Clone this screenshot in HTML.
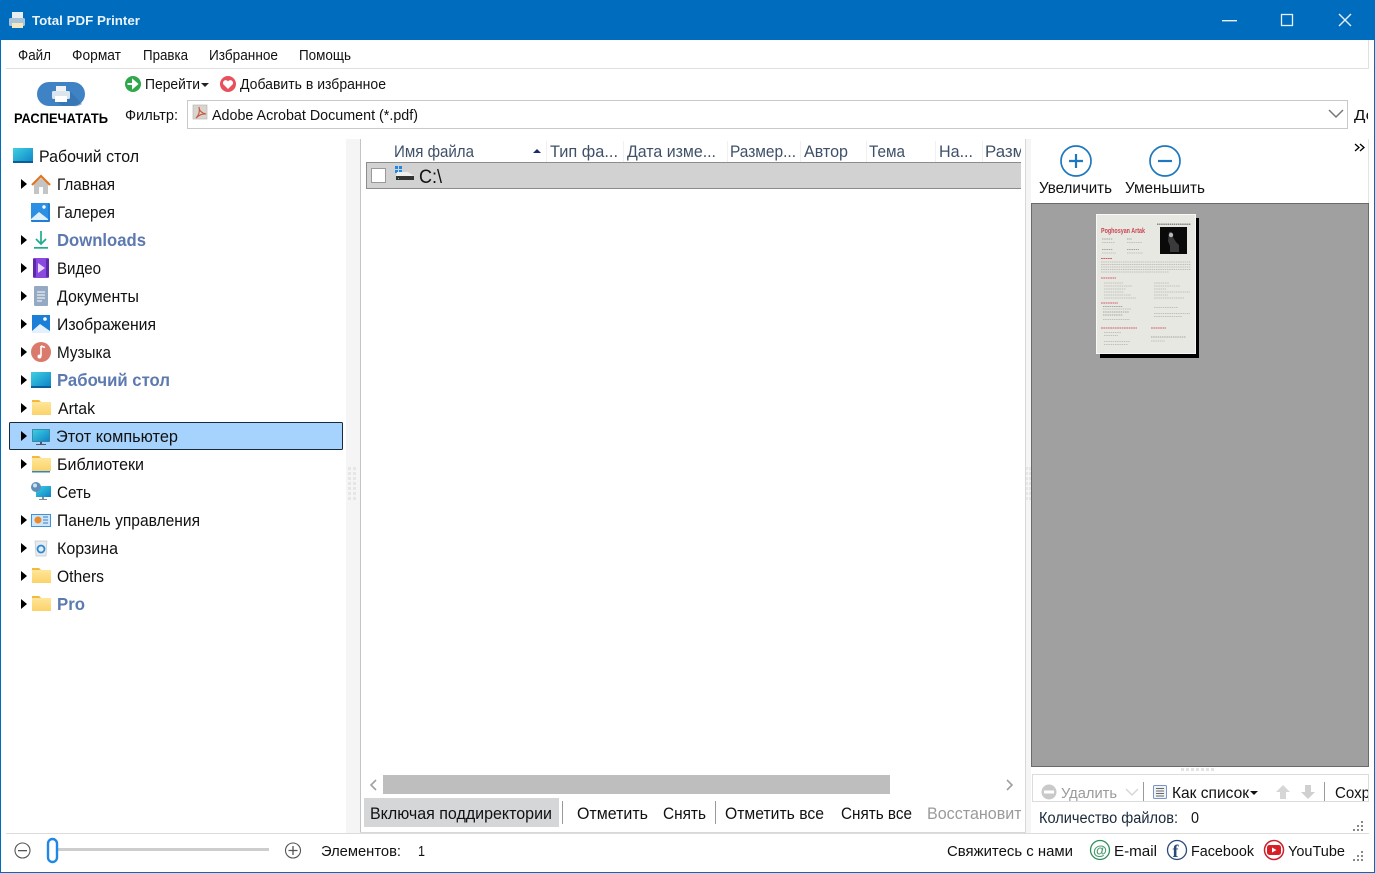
<!DOCTYPE html>
<html lang="ru"><head><meta charset="utf-8"><title>Total PDF Printer</title>
<style>
html,body{margin:0;padding:0;background:#fff;width:1375px;height:873px;overflow:hidden}
svg{display:block}
text{font-family:"Liberation Sans","DejaVu Sans",sans-serif;font-size:15px;fill:#111}
.t{font-size:17px}
.b{font-weight:bold;fill:#5c79b0;font-size:17.5px}
.s{font-size:15px}
.h{fill:#3f5068;font-size:17px}
.g{fill:#9a9a9a}
</style></head><body>
<svg xmlns="http://www.w3.org/2000/svg" width="1375" height="873" viewBox="0 0 1375 873">
<defs>
<clipPath id="c1"><rect x="360" y="138" width="661" height="60"/></clipPath>
<clipPath id="c2"><rect x="920" y="798" width="101" height="30"/></clipPath>
<clipPath id="c3"><rect x="1030" y="775" width="338" height="26"/></clipPath>
<clipPath id="c4"><rect x="1350" y="100" width="18" height="30"/></clipPath>
<linearGradient id="fo" x1="0" y1="0" x2="0" y2="1"><stop offset="0" stop-color="#ffe9a0"/><stop offset="1" stop-color="#fbd26a"/></linearGradient>
<linearGradient id="de" x1="0" y1="0" x2="1" y2="1"><stop offset="0" stop-color="#3fd0e0"/><stop offset="1" stop-color="#0d83c8"/></linearGradient>
<g id="folder"><path d="M1 2h7l2 2h10v13H1z" fill="url(#fo)"/><path d="M1 2h7l2 2H1z" fill="#f3b93f"/></g>
<path id="ar" d="M0 0l6 5-6 5z" fill="#000"/>
</defs>

<!-- window -->
<rect width="1375" height="873" fill="#fff"/>
<rect width="1375" height="40" fill="#006cbe"/>
<rect x="0" y="0" width="1" height="873" fill="#006cbe"/>
<rect x="1374" y="0" width="1" height="873" fill="#006cbe"/>
<rect x="0" y="872" width="1375" height="1" fill="#006cbe"/>

<!-- title icon -->
<rect x="12" y="12" width="11" height="7" fill="#e8edf2"/>
<rect x="9" y="18" width="16" height="8" rx="1.500" fill="#a9c3d8"/>
<rect x="12" y="23" width="11" height="5" fill="#f4e7c2"/>
<text x="32" y="25" textLength="108" lengthAdjust="spacingAndGlyphs" style="font-size:13px;font-weight:bold;fill:#fff;opacity:.92">Total PDF Printer</text>
<rect x="1222" y="20" width="15" height="1.400" fill="#e8f1f9"/>
<rect x="1281.500" y="14.500" width="11" height="11" fill="none" stroke="#e8f1f9" stroke-width="1.300"/>
<path d="M1339 14l12 12M1351 14l-12 12" stroke="#e8f1f9" stroke-width="1.400"/>

<!-- menu -->
<rect x="6" y="68" width="1363" height="1" fill="#e0e0e0"/>
<rect x="1368" y="40" width="1" height="29" fill="#e0e0e0"/>
<text class="s" x="18" y="60" textLength="33" lengthAdjust="spacingAndGlyphs">Файл</text>
<text class="s" x="72" y="60" textLength="49" lengthAdjust="spacingAndGlyphs">Формат</text>
<text class="s" x="143" y="60" textLength="45" lengthAdjust="spacingAndGlyphs">Правка</text>
<text class="s" x="209" y="60" textLength="69" lengthAdjust="spacingAndGlyphs">Избранное</text>
<text class="s" x="299" y="60" textLength="52" lengthAdjust="spacingAndGlyphs">Помощь</text>

<!-- print button -->
<rect x="37" y="82" width="48" height="24" rx="12" fill="#3f83c4"/>
<path d="M69 90l13 14a12 12 0 0 1-9 2H62l-9-8z" fill="#2f6ca8" opacity=".5"/>
<rect x="56" y="86" width="10" height="6" fill="#f0f3f6"/>
<rect x="52" y="91" width="18" height="8" rx="1.500" fill="#dbe5ee"/>
<rect x="55" y="96" width="12" height="6" fill="#fff"/>
<text x="14" y="123" textLength="94" lengthAdjust="spacingAndGlyphs" style="font-size:13.500px;font-weight:bold;fill:#000">РАСПЕЧАТАТЬ</text>

<!-- go / fav -->
<circle cx="133" cy="84" r="8" fill="#2ea84b"/>
<path d="M127.500 84h6M133 80.500l4 3.500-4 3.500z" stroke="#fff" stroke-width="2" fill="#fff"/>
<text class="s" x="145" y="89" textLength="55" lengthAdjust="spacingAndGlyphs">Перейти</text>
<path d="M201 83h8l-4 4z" fill="#222"/>
<circle cx="228" cy="84" r="8" fill="#e8505b"/>
<path d="M228 89l-4.600-4.600a2.600 2.600 0 0 1 4.600-3 2.600 2.600 0 0 1 4.600 3z" fill="#fff"/>
<text class="s" x="240" y="89" textLength="146" lengthAdjust="spacingAndGlyphs">Добавить в избранное</text>

<!-- filter -->
<text class="s" x="125" y="120" textLength="53" lengthAdjust="spacingAndGlyphs">Фильтр:</text>
<rect x="187.500" y="100.500" width="1160" height="28" fill="#fff" stroke="#c9c9c9"/>
<rect x="193" y="105" width="14" height="14" fill="#d8d4d0" stroke="#b5b0aa" stroke-width=".6"/>
<path d="M196 118c3-3 4-7 3-11 0 4 3 6 7 7-4-.5-7 1-10 4z" fill="none" stroke="#c8553c" stroke-width="1.100"/>
<text class="s" x="212" y="120" textLength="206" lengthAdjust="spacingAndGlyphs">Adobe Acrobat Document (*.pdf)</text>
<path d="M1329 110l7 7 7-7" fill="none" stroke="#777" stroke-width="1.500"/>
<text class="s" x="1354" y="120" textLength="21" lengthAdjust="spacingAndGlyphs" clip-path="url(#c4)">До</text>

<!-- tree -->
<rect x="13" y="148" width="20" height="15" fill="url(#de)"/><rect x="13" y="161" width="20" height="2" fill="#0b5f99"/>
<text class="t" x="39" y="162" textLength="100" lengthAdjust="spacingAndGlyphs">Рабочий стол</text>

<rect x="9.500" y="422.500" width="333" height="27" rx="1" fill="#a6d3fd" stroke="#1a2a3a"/>

<use href="#ar" x="21" y="179"/><use href="#ar" x="21" y="235"/><use href="#ar" x="21" y="263"/><use href="#ar" x="21" y="291"/><use href="#ar" x="21" y="319"/><use href="#ar" x="21" y="347"/><use href="#ar" x="21" y="375"/><use href="#ar" x="21" y="403"/><use href="#ar" x="21" y="431"/><use href="#ar" x="21" y="459"/><use href="#ar" x="21" y="515"/><use href="#ar" x="21" y="543"/><use href="#ar" x="21" y="571"/><use href="#ar" x="21" y="599"/>

<!-- home -->
<path d="M34 184v10h14v-10l-7-6z" fill="#c4c4c4"/><rect x="39" y="187" width="4" height="7" fill="#fff"/>
<path d="M32 185l9-9 9 9" fill="none" stroke="#e2751c" stroke-width="2.200"/>
<!-- gallery -->
<rect x="31" y="203" width="19" height="19" rx="1" fill="#1f7fd6"/>
<rect x="31" y="203" width="17" height="17" fill="#2b8fe4"/>
<path d="M31 219l8-7 9 7v1H31z" fill="#dfeffc"/><circle cx="44" cy="207" r="1.700" fill="#fff"/>
<!-- downloads -->
<path d="M41 231v13M36 239l5 5 5-5" fill="none" stroke="#1ead8c" stroke-width="1.700"/><rect x="34" y="247" width="14" height="1.700" fill="#1ead8c"/>
<!-- video -->
<rect x="33" y="258" width="16" height="20" rx="1" fill="#8a4ae0"/>
<path d="M33 259h3v18h-3zM46 259h3v18h-3z" fill="#5c2aa8"/>
<path d="M38 263l7 5-7 5z" fill="#ead9ff"/>
<!-- docs -->
<rect x="34" y="286" width="14" height="20" rx="1" fill="#95a9c2"/>
<path d="M37 292h8M37 295h8M37 298h8M37 301h5" stroke="#fff" stroke-width="1"/>
<!-- images -->
<rect x="32" y="315" width="18" height="18" fill="#1b7fd8"/>
<path d="M32 331l8-7 10 7v2H32z" fill="#e4f1fc"/><circle cx="45" cy="319" r="1.800" fill="#fff"/>
<!-- music -->
<circle cx="41" cy="352" r="10" fill="#d97a6c"/><path d="M41 346v10M41 346l4 1.500" stroke="#fff" stroke-width="1.600" fill="none"/><circle cx="39.500" cy="356.500" r="2" fill="#fff"/>
<!-- desktop 2 -->
<rect x="31" y="372" width="20" height="15" fill="url(#de)"/><rect x="31" y="386" width="20" height="2" fill="#0b5f99"/>
<!-- Artak -->
<use href="#folder" x="31" y="398"/>
<!-- pc -->
<rect x="32.500" y="429.500" width="17" height="12" fill="url(#de)" stroke="#27718f" stroke-width=".7"/><rect x="40" y="442" width="2" height="2" fill="#556"/><rect x="36" y="444" width="10" height="1" fill="#556"/>
<!-- libs -->
<use href="#folder" x="31" y="454"/><rect x="32" y="471" width="18" height="1.500" fill="#2e86c8"/>
<!-- net -->
<rect x="36" y="486" width="15" height="11" fill="url(#de)"/><rect x="42" y="497" width="2" height="2" fill="#889"/><rect x="39" y="499" width="8" height="1" fill="#889"/><circle cx="36" cy="487" r="5" fill="#5f8fb8"/><circle cx="35" cy="485.500" r="2" fill="#cfe0ee"/>
<!-- control panel -->
<rect x="31.500" y="514.500" width="19" height="12" fill="#cfe5f8" stroke="#3a94dc"/><circle cx="38" cy="520" r="3.500" fill="#e98b2a"/><path d="M43 517h5M43 520h5M43 523h5" stroke="#3a7fc0" stroke-width="1"/>
<!-- bin -->
<path d="M35 541h12l-1 15H36z" fill="#e7ebee" stroke="#c3c8cc" stroke-width=".7"/><circle cx="41" cy="549" r="3.500" fill="none" stroke="#2a8ad8" stroke-width="1.800"/>
<!-- others / pro -->
<use href="#folder" x="31" y="566"/><use href="#folder" x="31" y="594"/>

<text class="t" x="57" y="190" textLength="58" lengthAdjust="spacingAndGlyphs">Главная</text>
<text class="t" x="57" y="218" textLength="58" lengthAdjust="spacingAndGlyphs">Галерея</text>
<text class="b" x="57" y="246" textLength="89" lengthAdjust="spacingAndGlyphs">Downloads</text>
<text class="t" x="57" y="274" textLength="44" lengthAdjust="spacingAndGlyphs">Видео</text>
<text class="t" x="57" y="302" textLength="82" lengthAdjust="spacingAndGlyphs">Документы</text>
<text class="t" x="57" y="330" textLength="99" lengthAdjust="spacingAndGlyphs">Изображения</text>
<text class="t" x="57" y="358" textLength="54" lengthAdjust="spacingAndGlyphs">Музыка</text>
<text class="b" x="57" y="386" textLength="113" lengthAdjust="spacingAndGlyphs">Рабочий стол</text>
<text class="t" x="58" y="414" textLength="37" lengthAdjust="spacingAndGlyphs">Artak</text>
<text class="t" x="56" y="442" textLength="122" lengthAdjust="spacingAndGlyphs">Этот компьютер</text>
<text class="t" x="57" y="470" textLength="87" lengthAdjust="spacingAndGlyphs">Библиотеки</text>
<text class="t" x="57" y="498" textLength="34" lengthAdjust="spacingAndGlyphs">Сеть</text>
<text class="t" x="57" y="526" textLength="143" lengthAdjust="spacingAndGlyphs">Панель управления</text>
<text class="t" x="57" y="554" textLength="61" lengthAdjust="spacingAndGlyphs">Корзина</text>
<text class="t" x="57" y="582" textLength="47" lengthAdjust="spacingAndGlyphs">Others</text>
<text class="b" x="57" y="610" textLength="28" lengthAdjust="spacingAndGlyphs">Pro</text>

<!-- splitters -->
<rect x="346" y="139" width="14" height="694" fill="#f5f5f5"/>
<rect x="1026" y="139" width="5" height="694" fill="#f5f5f5"/>
<g fill="#e6e6e6"><rect x="348" y="467" width="3" height="3"/><rect x="353" y="467" width="3" height="3"/><rect x="348" y="472" width="3" height="3"/><rect x="353" y="472" width="3" height="3"/><rect x="348" y="477" width="3" height="3"/><rect x="353" y="477" width="3" height="3"/><rect x="348" y="482" width="3" height="3"/><rect x="353" y="482" width="3" height="3"/><rect x="348" y="487" width="3" height="3"/><rect x="353" y="487" width="3" height="3"/><rect x="348" y="492" width="3" height="3"/><rect x="353" y="492" width="3" height="3"/><rect x="348" y="497" width="3" height="3"/><rect x="353" y="497" width="3" height="3"/>
<rect x="1026" y="467" width="2" height="3"/><rect x="1029" y="467" width="2" height="3"/><rect x="1026" y="472" width="2" height="3"/><rect x="1029" y="472" width="2" height="3"/><rect x="1026" y="477" width="2" height="3"/><rect x="1029" y="477" width="2" height="3"/><rect x="1026" y="482" width="2" height="3"/><rect x="1029" y="482" width="2" height="3"/><rect x="1026" y="487" width="2" height="3"/><rect x="1029" y="487" width="2" height="3"/><rect x="1026" y="492" width="2" height="3"/><rect x="1029" y="492" width="2" height="3"/><rect x="1026" y="497" width="2" height="3"/><rect x="1029" y="497" width="2" height="3"/></g>

<!-- list panel -->
<rect x="360" y="139" width="665" height="694" fill="#fff"/>
<rect x="360" y="139" width="1" height="694" fill="#c4c4c4"/>
<rect x="1025" y="139" width="1" height="694" fill="#d8d8d8"/>
<rect x="360" y="832" width="666" height="1" fill="#d8d8d8"/>
<g fill="#f0f0f0"><rect x="546" y="141" width="1" height="21"/><rect x="623" y="141" width="1" height="21"/><rect x="727" y="141" width="1" height="21"/><rect x="800" y="141" width="1" height="21"/><rect x="866" y="141" width="1" height="21"/><rect x="935" y="141" width="1" height="21"/><rect x="982" y="141" width="1" height="21"/></g>
<g clip-path="url(#c1)">
<text class="h" x="394" y="157" textLength="80" lengthAdjust="spacingAndGlyphs">Имя файла</text>
<path d="M533 153l4-4 4 4z" fill="#1a2a6c"/>
<text class="h" x="550" y="157" textLength="68" lengthAdjust="spacingAndGlyphs">Тип фа...</text>
<text class="h" x="627" y="157" textLength="89" lengthAdjust="spacingAndGlyphs">Дата изме...</text>
<text class="h" x="730" y="157" textLength="66" lengthAdjust="spacingAndGlyphs">Размер...</text>
<text class="h" x="804" y="157" textLength="44" lengthAdjust="spacingAndGlyphs">Автор</text>
<text class="h" x="869" y="157" textLength="36" lengthAdjust="spacingAndGlyphs">Тема</text>
<text class="h" x="939" y="157" textLength="34" lengthAdjust="spacingAndGlyphs">На...</text>
<text class="h" x="985" y="157" textLength="58" lengthAdjust="spacingAndGlyphs">Размер</text>
</g>
<rect x="366" y="162" width="655" height="27" fill="#d2d2d2"/>
<rect x="366" y="162" width="655" height="1" fill="#8c8c8c"/>
<rect x="366" y="188" width="655" height="1" fill="#8c8c8c"/>
<rect x="366" y="162" width="1" height="27" fill="#8c8c8c"/>
<rect x="371.500" y="168.500" width="14" height="14" fill="#fff" stroke="#999"/>
<g fill="#1e88e5"><rect x="395" y="166" width="3" height="3"/><rect x="399" y="166" width="3" height="3"/><rect x="395" y="170" width="3" height="3"/><rect x="399" y="170" width="3" height="3"/></g>
<path d="M397 172h11l6 4H396z" fill="#eeeeee"/><rect x="396" y="176" width="18" height="4" fill="#333"/><rect x="398" y="178" width="1" height="1" fill="#4fd06a"/>
<text class="t" x="419" y="183" textLength="23" lengthAdjust="spacingAndGlyphs" style="font-size:19px">C:\</text>

<!-- h-scroll -->
<rect x="383" y="775" width="507" height="19" fill="#bebebe"/>
<path d="M376 780l-5 5 5 5" fill="none" stroke="#a0a0a0" stroke-width="1.600"/>
<path d="M1007 780l5 5-5 5" fill="none" stroke="#a0a0a0" stroke-width="1.600"/>

<!-- list toolbar -->
<rect x="364" y="798" width="195" height="29" fill="#d4d6d8"/>
<rect x="562" y="801" width="1" height="23" fill="#9a9a9a"/>
<rect x="715" y="801" width="1" height="23" fill="#9a9a9a"/>
<text class="t" x="370" y="819" textLength="182" lengthAdjust="spacingAndGlyphs">Включая поддиректории</text>
<text class="t" x="577" y="819" textLength="71" lengthAdjust="spacingAndGlyphs">Отметить</text>
<text class="t" x="663" y="819" textLength="43" lengthAdjust="spacingAndGlyphs">Снять</text>
<text class="t" x="725" y="819" textLength="99" lengthAdjust="spacingAndGlyphs">Отметить все</text>
<text class="t" x="841" y="819" textLength="71" lengthAdjust="spacingAndGlyphs">Снять все</text>
<text class="t g" x="927" y="819" textLength="103" lengthAdjust="spacingAndGlyphs" clip-path="url(#c2)">Восстановить</text>

<!-- preview panel -->
<circle cx="1076" cy="161" r="15" fill="none" stroke="#1f78bd" stroke-width="1.700"/>
<path d="M1069 161h14M1076 154v14" stroke="#1f78bd" stroke-width="2.200"/>
<circle cx="1165" cy="161" r="15" fill="none" stroke="#1f78bd" stroke-width="1.700"/>
<path d="M1158 161h14" stroke="#1f78bd" stroke-width="2.200"/>
<text class="s" x="1039" y="193" textLength="73" lengthAdjust="spacingAndGlyphs" style="font-size:15.500px">Увеличить</text>
<text class="s" x="1125" y="193" textLength="80" lengthAdjust="spacingAndGlyphs" style="font-size:15.500px">Уменьшить</text>
<path d="M1355 144l4 3.500-4 3.500M1360 144l4 3.500-4 3.500" fill="none" stroke="#000" stroke-width="1.300"/>
<rect x="1368" y="139" width="1" height="64" fill="#e4e4e4"/>
<rect x="1031.500" y="203.500" width="337" height="563" fill="#a0a0a0" stroke="#6a6a6a"/>

<!-- document -->
<rect x="1100" y="218" width="99" height="140" fill="#000"/>
<rect x="1096.500" y="214.500" width="99" height="139" fill="#e8e8e3" stroke="#f8f8f8"/>
<text x="1101" y="233" textLength="44" lengthAdjust="spacingAndGlyphs" style="font-size:7px;font-weight:bold;fill:#c9434f">Poghosyan Artak</text>
<path d="M1157 224.200h34" stroke="#666" stroke-width="1.200" stroke-dasharray="1.500 .6" fill="none"/>
<rect x="1160" y="227" width="27" height="27" fill="#0a0a0a"/>
<path d="M1169 232a3 3 0 0 1 4 2l0 3 3 5 3 3v7h-9v-6l-2-5z" fill="#3a3a3a"/><circle cx="1171" cy="235" r="2.200" fill="#b8b8b8"/>
<g fill="none" stroke="#8d8d8d" stroke-width=".8" stroke-dasharray="1.500 .7">
<path d="M1102 239h11M1127 239h5M1102 249.500h11M1127 249.500h12M1103 306.500h20M1103 312h26M1103 315h20M1151 337h35"/>
</g>
<g fill="none" stroke="#b4b4b0" stroke-width=".8" stroke-dasharray="1.500 .7">
<path d="M1102 242.500h13M1127 242.500h15M1102 253h14M1127 253h16"/>
<path d="M1101 262h90M1101 264.500h90M1101 267h90M1101 269.500h90M1101 272h68"/>
<path d="M1104 283h19M1104 286h28M1104 289h22M1104 292h20M1104 295h27M1104 298h32"/>
<path d="M1154 283h15M1154 286h26M1154 289h12M1154 292h36M1154 295h14M1154 298h30"/>
<path d="M1103 309h28M1103 319.500h27M1154 307.500h24M1154 313.500h36M1154 316.500h28"/>
<path d="M1104 332.500h17M1104 335.500h14M1104 341.500h26M1104 344.500h24M1151 341h14"/>
</g>
<g fill="none" stroke="#d2606c" stroke-width="1.100" stroke-dasharray="1.800 .5">
<path d="M1101 258.500h11M1101 278h15M1101 303h17M1101 328h36M1151 328h15"/>
</g>

<!-- splitter dots -->
<g fill="#e4e4e4"><rect x="1181" y="768" width="3" height="3"/><rect x="1186" y="768" width="3" height="3"/><rect x="1191" y="768" width="3" height="3"/><rect x="1196" y="768" width="3" height="3"/><rect x="1201" y="768" width="3" height="3"/><rect x="1206" y="768" width="3" height="3"/><rect x="1211" y="768" width="3" height="3"/></g>

<!-- preview toolbar -->
<rect x="1032.500" y="774.500" width="336" height="27" fill="#fff" stroke="#dcdcdc"/>
<g clip-path="url(#c3)">
<circle cx="1049" cy="792" r="7.500" fill="#c9c9c9"/><rect x="1044" y="790.500" width="10" height="3" fill="#fff"/>
<text class="s g" x="1061" y="798" textLength="56" lengthAdjust="spacingAndGlyphs">Удалить</text>
<path d="M1126 789l6 6 6-6" fill="none" stroke="#d6d6d6" stroke-width="1.500"/>
<rect x="1143" y="782" width="1" height="19" fill="#9a9a9a"/>
<rect x="1153.500" y="785.500" width="13" height="13" rx="1" fill="#eef1f6" stroke="#7d95c4"/>
<path d="M1156 788.500h8M1156 791h8M1156 793.500h8M1156 796h8" stroke="#666" stroke-width=".9"/>
<text class="s" x="1172" y="798" textLength="77" lengthAdjust="spacingAndGlyphs" style="font-size:16px">Как список</text>
<path d="M1250 791h8l-4 4z" fill="#111"/>
<path d="M1283 785l7 7h-4v7h-6v-7h-4z" fill="#d6d6d6"/>
<path d="M1305 785h6v7h4l-7 7-7-7h4z" fill="#d0d0d0"/>
<rect x="1324" y="782" width="1" height="19" fill="#9a9a9a"/>
<text class="s" x="1335" y="798" textLength="35" lengthAdjust="spacingAndGlyphs" style="font-size:16px">Сохр</text>
</g>
<text class="s" x="1039" y="823" textLength="139" lengthAdjust="spacingAndGlyphs" style="font-size:15.500px;fill:#1b2a3a">Количество файлов:</text>
<text class="s" x="1191" y="823" textLength="8" lengthAdjust="spacingAndGlyphs" style="font-size:15.500px">0</text>
<g fill="#888"><rect x="1361" y="821" width="2" height="2"/><rect x="1357" y="825" width="2" height="2"/><rect x="1361" y="825" width="2" height="2"/><rect x="1353" y="829" width="2" height="2"/><rect x="1357" y="829" width="2" height="2"/><rect x="1361" y="829" width="2" height="2"/></g>

<!-- status bar -->
<rect x="6" y="833" width="1363" height="1" fill="#dcdcdc"/>
<circle cx="22.500" cy="850.500" r="7.500" fill="none" stroke="#555" stroke-width="1.100"/><rect x="18" y="850" width="9" height="1.300" fill="#555"/>
<rect x="58" y="848" width="211" height="3" fill="#cdcdcd"/>
<rect x="48" y="839" width="9" height="23" rx="4.500" fill="#fff" stroke="#1e88e5" stroke-width="2.400"/>
<circle cx="293" cy="850.500" r="7.500" fill="none" stroke="#555" stroke-width="1.100"/><path d="M288.500 850.500h9M293 846v9" stroke="#555" stroke-width="1.300"/>
<text class="s" x="321" y="856" textLength="80" lengthAdjust="spacingAndGlyphs">Элементов:</text>
<text class="s" x="418" y="856" textLength="7" lengthAdjust="spacingAndGlyphs">1</text>
<text class="s" x="947" y="856" textLength="126" lengthAdjust="spacingAndGlyphs">Свяжитесь с нами</text>
<circle cx="1100" cy="850" r="9.500" fill="#fff" stroke="#2f8f5b" stroke-width="1.300"/>
<text x="1093" y="855" textLength="14" lengthAdjust="spacingAndGlyphs" style="font-size:14px;font-weight:bold;fill:#4a9a70">@</text>
<text class="s" x="1114" y="856" textLength="43" lengthAdjust="spacingAndGlyphs">E-mail</text>
<circle cx="1177" cy="850" r="9.500" fill="#fff" stroke="#2a4a7a" stroke-width="1.300"/>
<text x="1172.500" y="857" style="font-size:18px;font-weight:bold;fill:#2a4a7a;font-family:'Liberation Serif',serif">f</text>
<text class="s" x="1191" y="856" textLength="63" lengthAdjust="spacingAndGlyphs">Facebook</text>
<circle cx="1274" cy="850" r="9.500" fill="#fff" stroke="#c8202c" stroke-width="1.500"/>
<rect x="1267" y="845" width="14" height="10" rx="2.500" fill="#d81f26"/><path d="M1272 847.500l4.500 2.500-4.500 2.500z" fill="#fff"/>
<text class="s" x="1288" y="856" textLength="57" lengthAdjust="spacingAndGlyphs">YouTube</text>
<g fill="#888"><rect x="1361" y="851" width="2" height="2"/><rect x="1357" y="855" width="2" height="2"/><rect x="1361" y="855" width="2" height="2"/><rect x="1353" y="859" width="2" height="2"/><rect x="1357" y="859" width="2" height="2"/><rect x="1361" y="859" width="2" height="2"/></g>
</svg>
</body></html>
